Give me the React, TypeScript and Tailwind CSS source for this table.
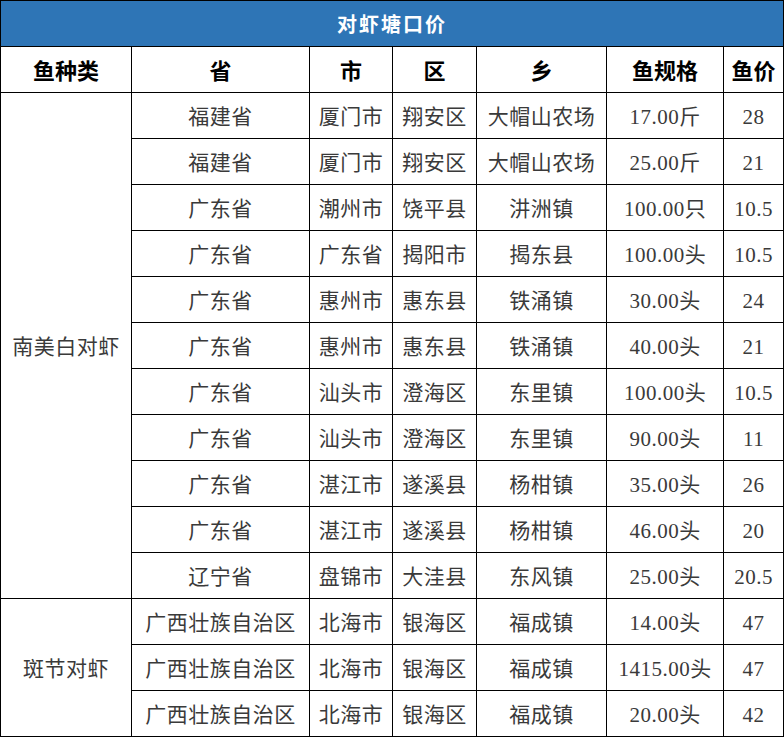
type Row = {
  prov: string
  city: string
  dist: string
  town: string
  spec: string
  price: string
}

const whiteShrimp: Row[] = [
  { prov: '福建省', city: '厦门市', dist: '翔安区', town: '大帽山农场', spec: '17.00斤', price: '28' },
  { prov: '福建省', city: '厦门市', dist: '翔安区', town: '大帽山农场', spec: '25.00斤', price: '21' },
  { prov: '广东省', city: '潮州市', dist: '饶平县', town: '汫洲镇', spec: '100.00只', price: '10.5' },
  { prov: '广东省', city: '广东省', dist: '揭阳市', town: '揭东县', spec: '100.00头', price: '10.5' },
  { prov: '广东省', city: '惠州市', dist: '惠东县', town: '铁涌镇', spec: '30.00头', price: '24' },
  { prov: '广东省', city: '惠州市', dist: '惠东县', town: '铁涌镇', spec: '40.00头', price: '21' },
  { prov: '广东省', city: '汕头市', dist: '澄海区', town: '东里镇', spec: '100.00头', price: '10.5' },
  { prov: '广东省', city: '汕头市', dist: '澄海区', town: '东里镇', spec: '90.00头', price: '11' },
  { prov: '广东省', city: '湛江市', dist: '遂溪县', town: '杨柑镇', spec: '35.00头', price: '26' },
  { prov: '广东省', city: '湛江市', dist: '遂溪县', town: '杨柑镇', spec: '46.00头', price: '20' },
  { prov: '辽宁省', city: '盘锦市', dist: '大洼县', town: '东风镇', spec: '25.00头', price: '20.5' },
]

const tigerShrimp: Row[] = [
  { prov: '广西壮族自治区', city: '北海市', dist: '银海区', town: '福成镇', spec: '14.00头', price: '47' },
  { prov: '广西壮族自治区', city: '北海市', dist: '银海区', town: '福成镇', spec: '1415.00头', price: '47' },
  { prov: '广西壮族自治区', city: '北海市', dist: '银海区', town: '福成镇', spec: '20.00头', price: '42' },
]

const groups = [
  { name: '南美白对虾', rows: whiteShrimp },
  { name: '斑节对虾', rows: tigerShrimp },
]

const cell = 'border border-black px-0 pt-[4px] text-center whitespace-nowrap'

export default function App() {
  return (
    <div className="bg-white" style={{ width: 784, height: 737 }}>
      <table
        className="w-[783px] table-fixed border-collapse text-[21px] tracking-[0.5px] text-[#3a3a3a]"
        style={{ fontFamily: '"Liberation Serif", "Noto Sans CJK SC", serif' }}
      >
        <colgroup>
          <col className="w-[131px]" />
          <col className="w-[178px]" />
          <col className="w-[83px]" />
          <col className="w-[84px]" />
          <col className="w-[130px]" />
          <col className="w-[117px]" />
          <col className="w-[60px]" />
        </colgroup>
        <thead>
          <tr className="h-[46px]">
            <th
              colSpan={7}
              className="border border-black bg-[#2e75b6] pt-[2px] text-center text-[20px] font-bold tracking-[2px] text-white"
            >
              对虾塘口价
            </th>
          </tr>
          <tr className="h-[46px] text-black">
            {['鱼种类', '省', '市', '区', '乡', '鱼规格', '鱼价'].map((h) => (
              <th key={h} className={`${cell} text-[22px] font-bold tracking-[0px]`}>{h}</th>
            ))}
          </tr>
        </thead>
        <tbody>
          {groups.map((g) =>
            g.rows.map((r, idx) => (
              <tr key={g.name + idx} className="h-[46px]">
                {idx === 0 && (
                  <td rowSpan={g.rows.length} className={cell}>{g.name}</td>
                )}
                <td className={cell}>{r.prov}</td>
                <td className={cell}>{r.city}</td>
                <td className={cell}>{r.dist}</td>
                <td className={cell}>{r.town}</td>
                <td className={cell}>{r.spec}</td>
                <td className={cell}>{r.price}</td>
              </tr>
            )),
          )}
        </tbody>
      </table>
    </div>
  )
}
